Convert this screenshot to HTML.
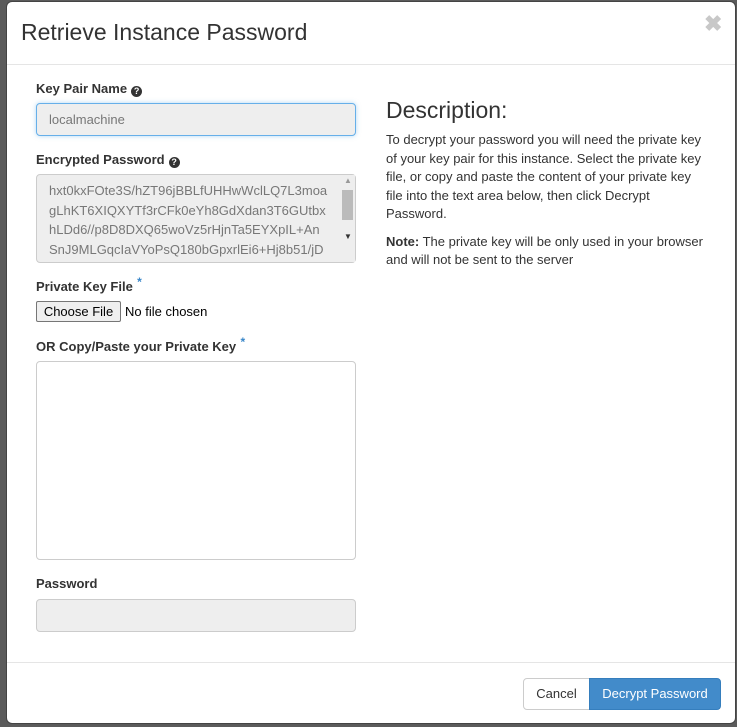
<!DOCTYPE html>
<html><head><meta charset="utf-8"><style>
*{box-sizing:border-box}
body{margin:0;width:737px;height:727px;background:#5b5b5b;font-family:"Liberation Sans",sans-serif;color:#333;position:relative;overflow:hidden}
.a{position:absolute}
.modal{left:6px;top:1px;width:730px;height:723px;background:#fff;border-radius:6px;border:1px solid #444}
.lbl{font-size:13px;font-weight:bold;color:#333;line-height:15px}
.q{display:inline-block;width:11px;height:11px;border-radius:50%;background:#333;color:#fff;font-size:9px;line-height:11px;text-align:center;vertical-align:-1px;margin-left:4px}
.star{position:absolute;color:#3a87c9;font-size:12px;top:-4px;right:-9px}
.inp{background:#eee;border:1px solid #ccc;border-radius:4px}
.p{font-size:13px;line-height:18.5px;color:#333;margin:0}
</style></head><body>
<div class="a modal"></div>
<div class="a" style="left:21px;top:19px;font-size:23px;color:#333">Retrieve Instance Password</div>
<div class="a" style="left:704px;top:11px;font-size:22px;font-weight:bold;color:#c8c8c8">✖</div>
<div class="a" style="left:7px;top:64px;width:728px;height:1px;background:#e5e5e5"></div>

<div class="a lbl" style="left:36px;top:81px">Key Pair Name<span class="q">?</span></div>
<div class="a inp" style="left:36px;top:103px;width:320px;height:33px;border-color:#66afe9;box-shadow:0 0 5px rgba(102,175,233,.5);font-size:13px;color:#777;padding:8px 12px">localmachine</div>

<div class="a lbl" style="left:36px;top:152px">Encrypted Password<span class="q">?</span></div>
<div class="a inp" style="left:36px;top:174px;width:320px;height:89px;overflow:hidden;font-size:13px;color:#777;line-height:19.5px;padding:6px 12px">hxt0kxFOte3S/hZT96jBBLfUHHwWclLQ7L3moa<br>gLhKT6XIQXYTf3rCFk0eYh8GdXdan3T6GUtbx<br>hLDd6//p8D8DXQ65woVz5rHjnTa5EYXpIL+An<br>SnJ9MLGqcIaVYoPsQ180bGpxrlEi6+Hj8b51/jD<br>hxEFiX4knEAmiwkU0v/8kdCHWNSXmCN41MO</div>
<div class="a" style="left:340px;top:175px;width:15px;height:87px;background:#eee"></div>
<div class="a" style="left:342px;top:190px;width:11px;height:30px;background:#bbb"></div>
<div class="a" style="left:344px;top:176px;font-size:8px;color:#999">▲</div>
<div class="a" style="left:344px;top:232px;font-size:8px;color:#333">▼</div>

<div class="a lbl" style="left:36px;top:279px">Private Key File<span class="star">*</span></div>
<div class="a" style="left:36px;top:301px;width:85px;height:21px;border:1px solid #767676;border-radius:2px;background:#efefef;font-size:13px;text-align:center;line-height:19px;color:#000">Choose File</div>
<div class="a" style="left:125px;top:304px;font-size:13px;color:#000">No file chosen</div>

<div class="a lbl" style="left:36px;top:339px">OR Copy/Paste your Private Key<span class="star">*</span></div>
<div class="a" style="left:36px;top:361px;width:320px;height:199px;border:1px solid #ccc;border-radius:4px"></div>

<div class="a lbl" style="left:36px;top:576px">Password</div>
<div class="a inp" style="left:36px;top:599px;width:320px;height:33px"></div>

<div class="a" style="left:386px;top:97px;font-size:23px;color:#333">Description:</div>
<div class="a" style="left:386px;top:131px;width:320px">
<p class="p">To decrypt your password you will need the private key of your key pair for this instance. Select the private key file, or copy and paste the content of your private key file into the text area below, then click Decrypt Password.</p>
<p class="p" style="margin-top:9px"><b>Note:</b> The private key will be only used in your browser and will not be sent to the server</p>
</div>

<div class="a" style="left:7px;top:662px;width:728px;height:1px;background:#e5e5e5"></div>
<div class="a" style="left:523px;top:678px;width:67px;height:32px;border:1px solid #ccc;border-radius:4px 0 0 4px;font-size:13px;text-align:center;line-height:30px;color:#333">Cancel</div>
<div class="a" style="left:589px;top:678px;width:132px;height:32px;background:#428bca;border:1px solid #357ebd;border-radius:0 4px 4px 0;font-size:13px;text-align:center;line-height:30px;color:#fff">Decrypt Password</div>
</body></html>
